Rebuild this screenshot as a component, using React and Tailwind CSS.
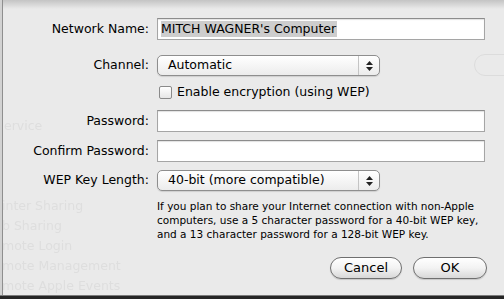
// Hoja "Compartir Internet" estilo Mac OS X: nombre de red, canal y WEP
import React from 'react';

const font = { fontFamily: '"DejaVu Sans", "Lucida Grande", Verdana, sans-serif' };

function Ghost() {
  // texto tenue de la ventana que queda detrás de la hoja (sólo donde la hoja está vacía)
  const rows = [
    ['top-[117px] left-[4px]', 'ervice'],
    ['top-[197px] left-[2px]', 'inter Sharing'],
    ['top-[217px] left-[2px]', 'b Sharing'],
    ['top-[237px] left-[2px]', 'mote Login'],
    ['top-[257px] left-[2px]', 'mote Management'],
    ['top-[277px] left-[2px]', 'mote Apple Events'],
  ];
  return (
    <div className="absolute inset-0 text-[12.5px] text-[#dedede] blur-[0.6px]" style={font}>
      {rows.map(([pos, t]) => (
        <span key={t} className={`absolute ${pos} whitespace-nowrap`}>{t}</span>
      ))}
      <div className="absolute top-[54px] left-[474px] w-[60px] h-[22px] rounded-full border border-[#dcdcdc]" />
    </div>
  );
}

function TextField({ children }) {
  return (
    <div className="h-[22px] bg-white border border-[#a5a5a5] border-t-[#8c8c8c] shadow-[inset_0_1px_1px_rgba(0,0,0,0.12)] flex items-center px-[3px]">
      {children}
    </div>
  );
}

function Popup({ value }) {
  return (
    <div className="w-[223px] h-[21px] rounded-[5px] border border-[#8e8e8e] bg-gradient-to-b from-white to-[#ececec] shadow-[0_1px_1px_rgba(0,0,0,0.12)] flex items-stretch">
      <div className="flex-1 flex items-center pl-[10px] text-[12.5px] text-black">{value}</div>
      <div className="w-[21px] border-l border-[#c4c4c4] flex flex-col items-center justify-center gap-[2px]">
        <svg width="7" height="4" viewBox="0 0 7 4"><path d="M3.5 0L7 4H0z" fill="#222" /></svg>
        <svg width="7" height="4" viewBox="0 0 7 4"><path d="M0 0h7L3.5 4z" fill="#222" /></svg>
      </div>
    </div>
  );
}

function Label({ children }) {
  return <div className="text-right text-[12.5px] text-black whitespace-nowrap">{children}</div>;
}

function PillButton({ children, w }) {
  return (
    <button className={`${w} h-[22px] rounded-full border border-[#6f6f6f] bg-gradient-to-b from-white via-[#f3f3f3] to-[#d8d8d8] shadow-[0_1px_1px_rgba(0,0,0,0.15)] text-[13px] text-black flex items-center justify-center`}>
      {children}
    </button>
  );
}

export default function App() {
  return (
    <div className="relative w-[504px] h-[299px] overflow-hidden bg-[#eaeaea]" style={font}>
      <Ghost />

      {/* sombra superior y bordes de la hoja */}
      <div className="absolute top-0 left-0 right-0 h-[9px] bg-gradient-to-b from-[#c4c4c4] to-transparent" />
      <div className="absolute top-0 bottom-0 left-[2px] w-px bg-[#8f8f8f]" />
      <div className="absolute top-0 bottom-0 left-0 w-[2px] bg-[#d2d2d2]" />
      <div className="absolute left-0 right-0 bottom-0 h-[4px] bg-[#262626] border-t border-[#7b7b7b]" />

      <div className="relative pt-[18px]">
        <div className="grid grid-cols-[149px_1fr] gap-x-[8px] items-center pr-[19px]">
          <Label>Network Name:</Label>
          <TextField>
            <span className="bg-[#cdcdcd] text-[12.5px] text-black leading-[16px] pr-px">MITCH WAGNER's Computer</span>
          </TextField>

          <div className="h-[15px] col-span-2" />

          <Label>Channel:</Label>
          <Popup value="Automatic" />

          <div className="h-[9px] col-span-2" />

          <div />
          <div className="flex items-center gap-[5px] pl-[2px] h-[15px]">
            <div className="w-[13px] h-[13px] rounded-[2px] border border-[#8a8a8a] bg-gradient-to-b from-white to-[#e6e6e6]" />
            <span className="text-[12.5px] text-black">Enable encryption (using WEP)</span>
          </div>

          <div className="h-[10px] col-span-2" />

          <Label>Password:</Label>
          <TextField />

          <div className="h-[8px] col-span-2" />

          <Label>Confirm Password:</Label>
          <TextField />

          <div className="h-[8px] col-span-2" />

          <Label>WEP Key Length:</Label>
          <Popup value="40-bit (more compatible)" />

          <div className="h-[8px] col-span-2" />

          <div />
          <p className="text-[10.5px] leading-[14px] text-black whitespace-nowrap">
            If you plan to share your Internet connection with non-Apple<br />
            computers, use a 5 character password for a 40-bit WEP key,<br />
            and a 13 character password for a 128-bit WEP key.
          </p>
        </div>

        <div className="flex justify-end gap-[11px] mt-[16px] pr-[17px]">
          <PillButton w="w-[72px]">Cancel</PillButton>
          <PillButton w="w-[74px]">OK</PillButton>
        </div>
      </div>
    </div>
  );
}
